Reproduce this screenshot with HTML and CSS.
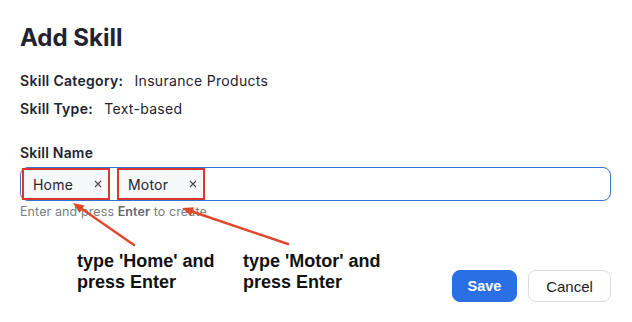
FILE: index.html
```html
<!DOCTYPE html>
<html lang="en">
<head>
  <meta charset="UTF-8" />
  <title>Add Skill</title>
  <link rel="stylesheet" href="styles.css">
</head>
<body>
  <div class="dialog">
    <h1>Add Skill</h1>
    <div class="info-row"><span class="info-label">Skill Category:</span> <span>Insurance Products</span></div>
    <div class="info-row"><span class="info-label">Skill Type:</span> <span>Text-based</span></div>

    <div class="field">
      <label class="field-label">Skill Name</label>
      <div class="tag-input">
        <span class="tag">Home
          <svg class="tag-x" width="8" height="8" viewBox="0 0 8 8"><path d="M1 1L7 7M7 1L1 7" /></svg>
        </span>
        <span class="tag">Motor
          <svg class="tag-x" width="8" height="8" viewBox="0 0 8 8"><path d="M1 1L7 7M7 1L1 7" /></svg>
        </span>
      </div>
      <div class="hint">Enter and press <b>Enter</b> to create</div>
    </div>

    <div class="bottom">
      <div class="note note-home">type 'Home' and<br>press Enter</div>
      <div class="note note-motor">type 'Motor' and<br>press Enter</div>
      <div class="actions">
        <button class="btn btn-primary">Save</button>
        <button class="btn btn-cancel">Cancel</button>
      </div>
    </div>

    <!-- annotation arrows -->
    <svg class="arrows" width="632" height="322" viewBox="0 0 632 322">
      <g stroke="#e2472a" stroke-width="2.4" fill="#e2472a" stroke-linecap="round">
        <line x1="134" y1="245" x2="82" y2="209" />
        <polygon points="73,203 84.6,205.5 79.5,213" stroke="none" />
        <line x1="288" y1="244" x2="192" y2="211.5" />
        <polygon points="182,208 193.9,207.2 191,215.8" stroke="none" />
      </g>
    </svg>
  </div>
</body>
</html>
```

FILE: styles.css
```css
body {
  margin: 0;
  background: #fff;
  font-family: Inter, "Noto Sans", sans-serif;
  color: #232330;
}

.dialog {
  position: relative;
  width: 632px;
  height: 322px;
  padding: 24px 21px 0 20px;
  box-sizing: border-box;
}

h1 {
  margin: 0 0 20px;
  font-size: 24px;
  font-weight: 700;
  line-height: 28px;
}

.info-row {
  font-size: 14px;
  line-height: 17px;
  letter-spacing: 0.3px;
  margin-bottom: 11px;
}

.info-label {
  font-weight: 600;
  margin-right: 7px;
}

.field {
  margin-top: 27px;
}

.field-label {
  display: block;
  font-size: 14px;
  font-weight: 600;
  line-height: 17px;
  letter-spacing: 0.2px;
  margin-bottom: 6px;
}

.tag-input {
  display: flex;
  align-items: center;
  gap: 7px;
  height: 34px;
  box-sizing: border-box;
  border: 1px solid #3a73cf;
  border-radius: 8px;
  padding: 0 1px;
}

.tag {
  display: flex;
  align-items: center;
  justify-content: space-between;
  width: 88px;
  height: 32px;
  box-sizing: border-box;
  padding: 0 6px 0 9px;
  border: 2px solid #d8392b;
  background: #f6f7f9;
  font-size: 14px;
  letter-spacing: 0.2px;
}

.tag-x {
  stroke: #444;
  stroke-width: 1.1;
}

.hint {
  margin-top: 3px;
  font-size: 12.5px;
  line-height: 15px;
  letter-spacing: 0.1px;
  color: #7b7b86;
}

.hint b {
  font-weight: 600;
  color: #66666f;
}

.bottom {
  display: flex;
  align-items: flex-start;
  margin-top: 32px;
}

.note {
  font-family: "Liberation Sans", Arial, sans-serif;
  font-weight: 700;
  font-size: 18px;
  line-height: 21px;
  color: #111;
}

.note-home {
  flex: 0 0 166px;
  margin-left: 57px;
}

.actions {
  display: flex;
  gap: 11px;
  margin-left: auto;
  margin-top: 19px;
}

.btn {
  height: 32px;
  padding: 0;
  border: 1px solid #dcdce0;
  border-radius: 8px;
  background: #fff;
  font-family: "Liberation Sans", Arial, sans-serif;
  font-size: 15px;
  color: #222;
}

.btn-primary {
  width: 65px;
  background: #2b6fe4;
  border-color: #2b6fe4;
  color: #fff;
  font-weight: 700;
  font-size: 14.5px;
}

.btn-cancel {
  width: 83px;
}

.arrows {
  position: absolute;
  left: 0;
  top: 0;
  pointer-events: none;
}
```
